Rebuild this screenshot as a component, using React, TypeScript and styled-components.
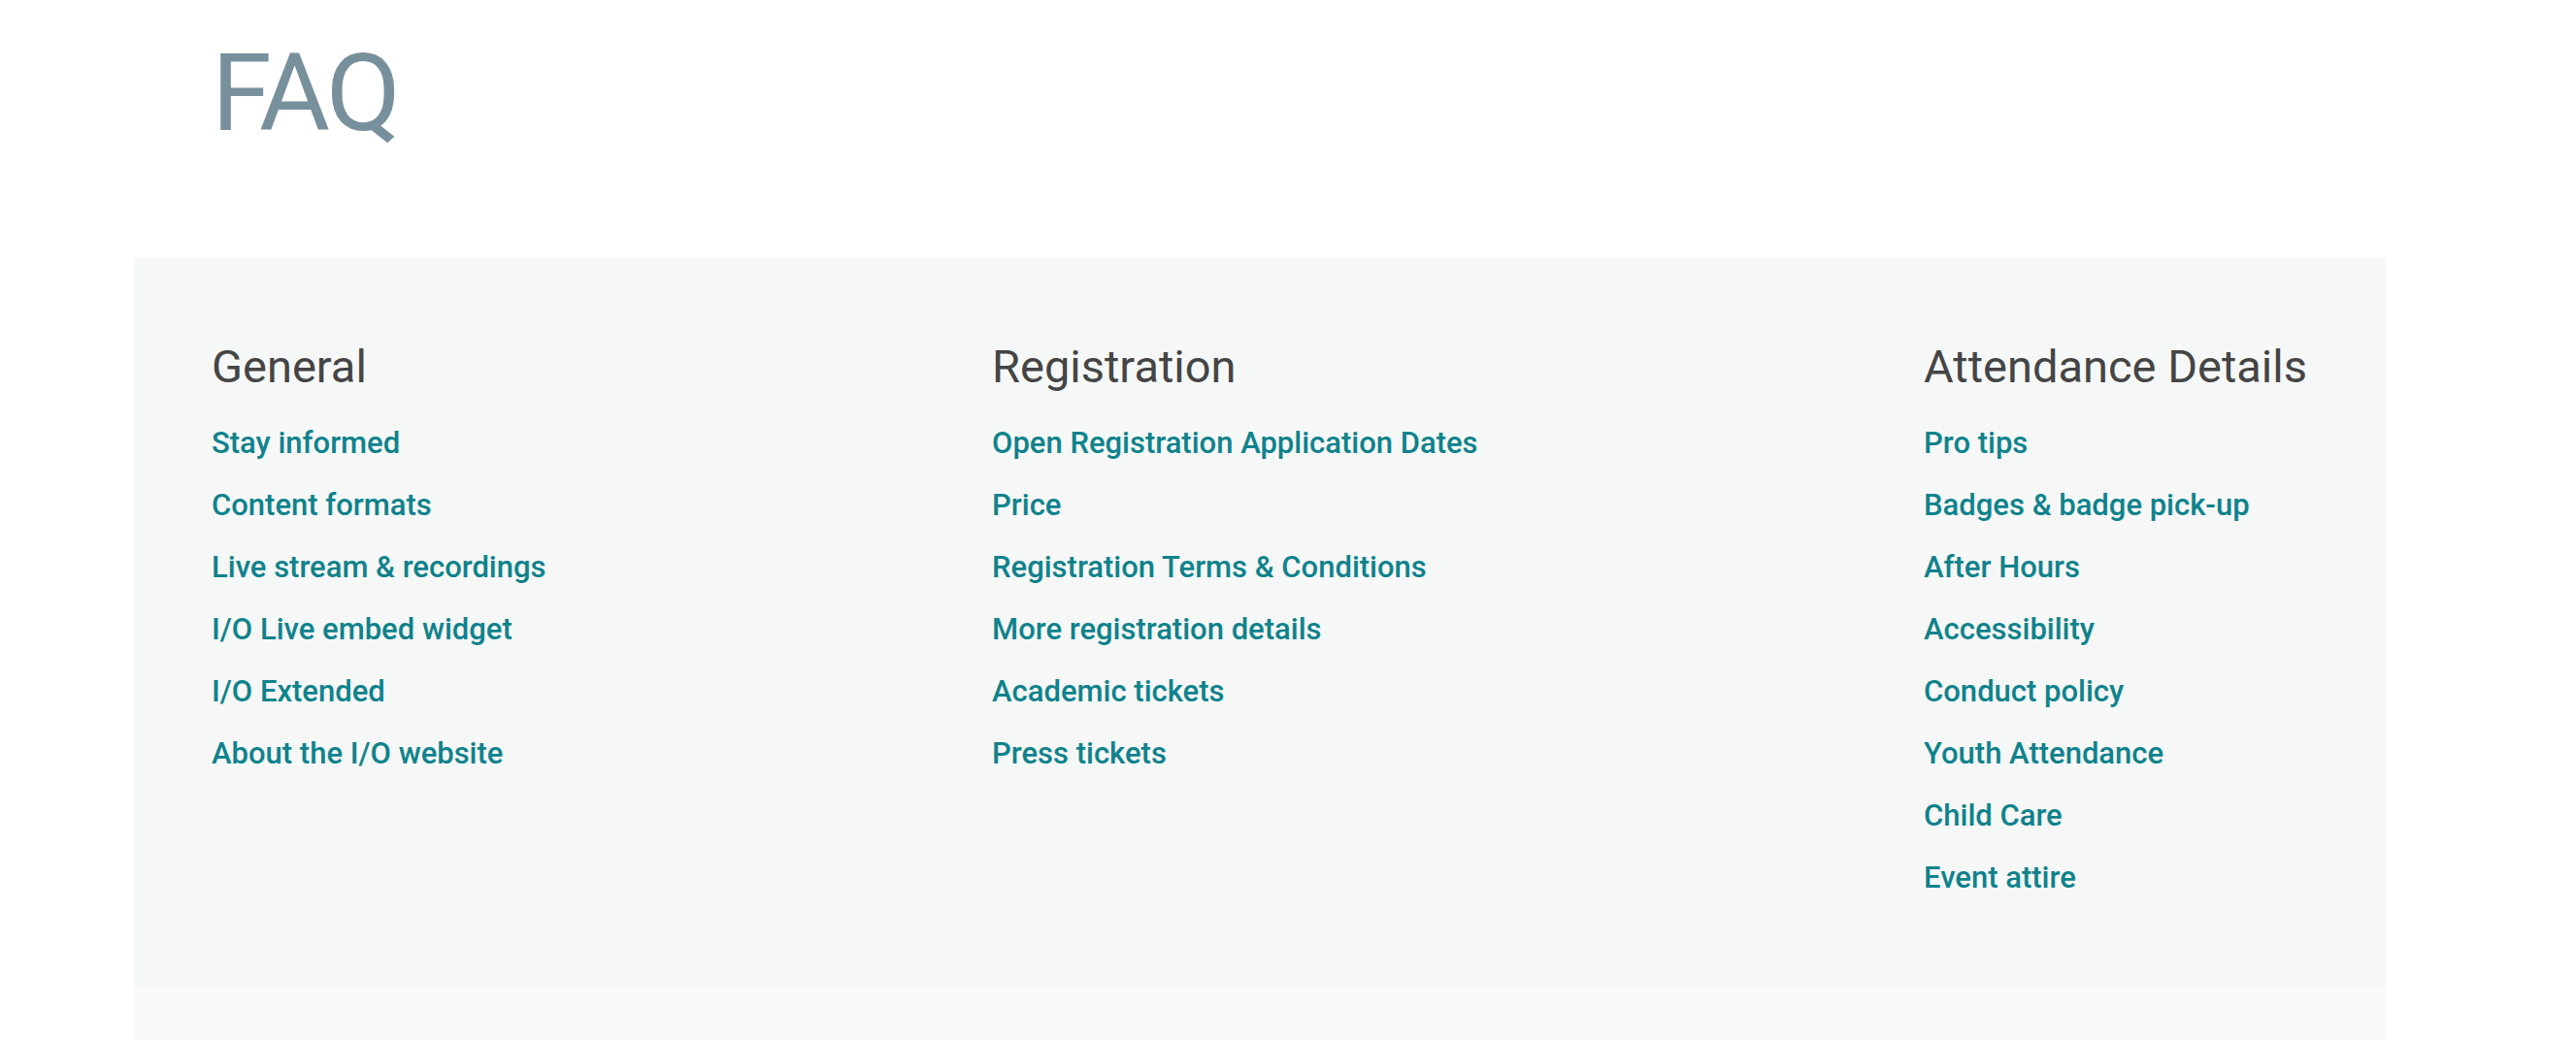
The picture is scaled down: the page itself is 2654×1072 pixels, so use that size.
import React from "react";
import styled, { createGlobalStyle } from "styled-components";

const GlobalStyle = createGlobalStyle`
  html, body {
    margin: 0;
    padding: 0;
    background: #ffffff;
    font-family: Roboto, "Noto Sans", "Liberation Sans", sans-serif;
  }
`;

const Page = styled.main`
  width: 2320px;
  margin-left: 138px;
  display: flex;
  flex-direction: column;
`;

const Title = styled.h1`
  margin: 29px 0 0;
  padding-left: 80px;
  font-size: 112px;
  line-height: 1.2;
  font-weight: 400;
  letter-spacing: -3.5px;
  color: #78909c;
  height: 237px;
`;

const Panel = styled.section`
  background: #f6f8f8;
  padding: 84px 81px 81px 80px;
  display: flex;
  justify-content: space-between;
  align-items: flex-start;
`;

const Column = styled.div`
  display: flex;
  flex-direction: column;
`;

const Heading = styled.h2`
  margin: 0 0 19px;
  font-size: 47px;
  line-height: 56px;
  font-weight: 400;
  color: #454545;
  white-space: nowrap;
`;

const LinkList = styled.ul`
  list-style: none;
  margin: 0;
  padding: 0;
`;

const Item = styled.li`
  font-size: 31px;
  line-height: 64px;
  height: 64px;
`;

const Link = styled.a`
  font-size: 31px;
  font-weight: 500;
  color: #0f828c;
  text-decoration: none;
  white-space: nowrap;
`;

const NextBand = styled.div`
  background: #fafafa;
  height: 54px;
`;

const columns = [
  {
    title: "General",
    links: [
      "Stay informed",
      "Content formats",
      "Live stream & recordings",
      "I/O Live embed widget",
      "I/O Extended",
      "About the I/O website",
    ],
  },
  {
    title: "Registration",
    links: [
      "Open Registration Application Dates",
      "Price",
      "Registration Terms & Conditions",
      "More registration details",
      "Academic tickets",
      "Press tickets",
    ],
  },
  {
    title: "Attendance Details",
    links: [
      "Pro tips",
      "Badges & badge pick-up",
      "After Hours",
      "Accessibility",
      "Conduct policy",
      "Youth Attendance",
      "Child Care",
      "Event attire",
    ],
  },
];

export default function App() {
  return (
    <>
      <GlobalStyle />
      <Page>
        <Title>FAQ</Title>
        <Panel>
          {columns.map((col) => (
            <Column key={col.title}>
              <Heading>{col.title}</Heading>
              <LinkList>
                {col.links.map((l) => (
                  <Item key={l}>
                    <Link href="#">{l}</Link>
                  </Item>
                ))}
              </LinkList>
            </Column>
          ))}
        </Panel>
        <NextBand />
      </Page>
    </>
  );
}
